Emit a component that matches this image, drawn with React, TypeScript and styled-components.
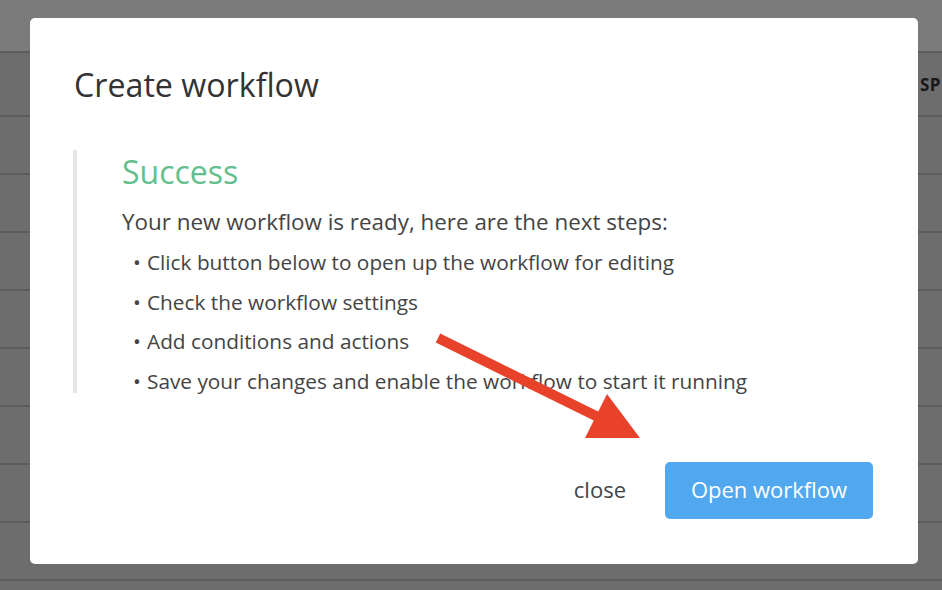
import React from "react";
import styled, { createGlobalStyle } from "styled-components";

const GlobalStyle = createGlobalStyle`
  html, body {
    margin: 0;
    padding: 0;
    width: 942px;
    height: 590px;
    overflow: hidden;
    font-family: "Open Sans", "Liberation Sans", sans-serif;
  }
`;

// page behind the dialog
const Page = styled.div`
  width: 942px;
  height: 590px;
  background: #dadada;
  display: flex;
  flex-direction: column;
`;

const TopBar = styled.div`
  height: 51px;
  flex-shrink: 0;
  background: #f6f6f6;
  border-bottom: 2px solid #b8b8b8;
`;

const Row = styled.div<{ $header?: boolean }>`
  height: ${(p) => (p.$header ? "62px" : "56px")};
  flex-shrink: 0;
  border-bottom: 2px solid #b8b8b8;
  display: flex;
  align-items: center;
  justify-content: flex-end;
  white-space: nowrap;
`;

const HeadCell = styled.span`
  width: 22px;
  overflow: hidden;
  font-size: 17px;
  font-weight: 700;
  color: #333;
  letter-spacing: 0.5px;
`;

const Overlay = styled.div`
  position: fixed;
  inset: 0;
  background: rgba(0, 0, 0, 0.5);
  display: flex;
  align-items: flex-start;
  justify-content: flex-start;
  padding: 18px 0 0 30px;
`;

const Modal = styled.div`
  width: 888px;
  box-sizing: border-box;
  background: #fff;
  border-radius: 5px;
  padding: 45px 45px 45px 44px;
  display: flex;
  flex-direction: column;
`;

const Title = styled.h2`
  margin: 0;
  font-size: 32.2px;
  line-height: 44px;
  font-weight: 400;
  color: #333;
`;

const Notice = styled.div`
  margin-top: 43px;
  margin-left: -1px;
  height: 243px;
  box-sizing: border-box;
  border-left: 4px solid #e6e6e6;
  padding-left: 45px;
`;

const NoticeHead = styled.h3`
  margin: 0;
  font-size: 32px;
  line-height: 44px;
  font-weight: 400;
  color: #63bf8d;
`;

const Intro = styled.p`
  margin: 12px 0 0;
  font-size: 22.4px;
  line-height: 32px;
  color: #444;
`;

const Steps = styled.ul`
  margin: 11px 0 0;
  padding: 0 0 0 11px;
  list-style: none;
  display: flex;
  flex-direction: column;
  gap: 13.5px;
`;

const Step = styled.li`
  font-size: 20.8px;
  line-height: 26px;
  color: #444;
  &::before {
    content: "•";
    display: inline-block;
    width: 14px;
  }
`;

const Footer = styled.div`
  margin-top: 69px;
  display: flex;
  justify-content: flex-end;
  align-items: center;
  gap: 20px;
`;

const CloseButton = styled.button`
  border: none;
  background: none;
  font-family: inherit;
  font-size: 22px;
  color: #444;
  padding: 0 19px 3px;
  height: 57px;
  cursor: pointer;
`;

const PrimaryButton = styled.button`
  border: none;
  border-radius: 5px;
  background: #52a8ef;
  color: #fff;
  font-family: inherit;
  font-size: 22px;
  height: 57px;
  width: 208px;
  padding: 0 0 3px;
  cursor: pointer;
`;

const Annotation = styled.svg`
  position: absolute;
  top: 0;
  left: 0;
  pointer-events: none;
`;

const steps = [
  "Click button below to open up the workflow for editing",
  "Check the workflow settings",
  "Add conditions and actions",
  "Save your changes and enable the workflow to start it running",
];

export default function App() {
  return (
    <>
      <GlobalStyle />
      <Page>
        <TopBar />
        <Row $header>
          <HeadCell>SP</HeadCell>
        </Row>
        {Array.from({ length: 8 }).map((_, i) => (
          <Row key={i} />
        ))}
      </Page>
      <Overlay>
        <Modal>
          <Title>Create workflow</Title>
          <Notice>
            <NoticeHead>Success</NoticeHead>
            <Intro>Your new workflow is ready, here are the next steps:</Intro>
            <Steps>
              {steps.map((s) => (
                <Step key={s}>{s}</Step>
              ))}
            </Steps>
          </Notice>
          <Footer>
            <CloseButton>close</CloseButton>
            <PrimaryButton>Open workflow</PrimaryButton>
          </Footer>
        </Modal>
        {/* red arrow drawn on the screenshot */}
        <Annotation width="942" height="590" viewBox="0 0 942 590">
          <line x1="438" y1="338" x2="600" y2="418" stroke="#e9422a" strokeWidth="10" />
          <polygon points="640,438 607,394 585,438" fill="#e9422a" />
        </Annotation>
      </Overlay>
    </>
  );
}
